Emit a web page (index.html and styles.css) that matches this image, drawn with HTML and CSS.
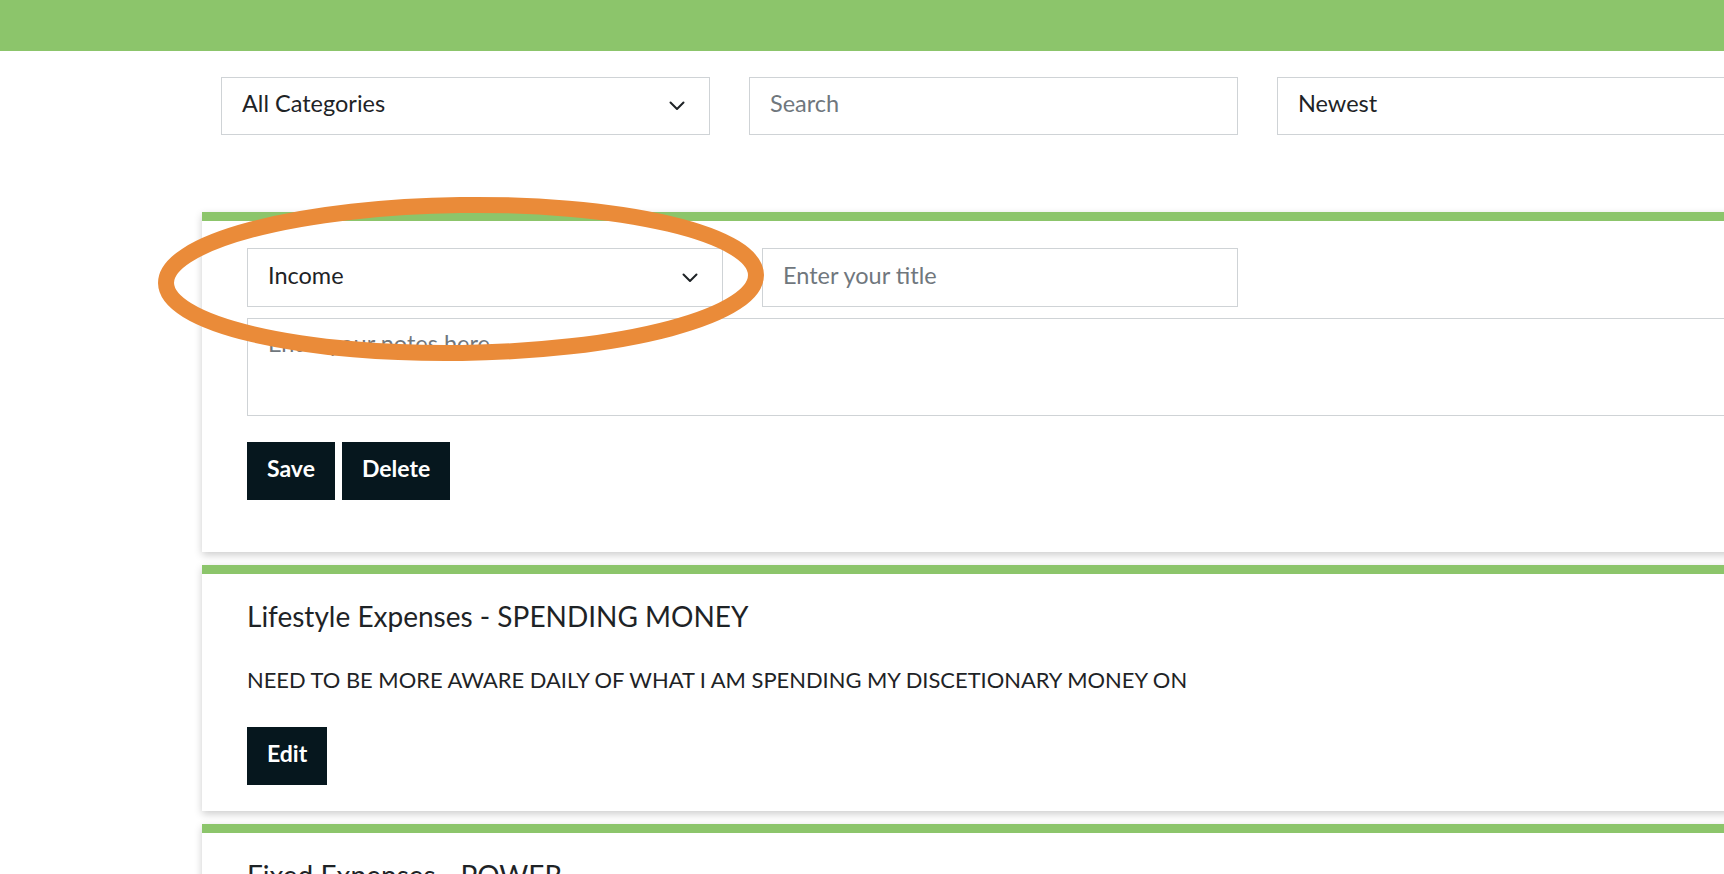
FILE: index.html
```html
<!DOCTYPE html>
<html lang="en">
<head>
<meta charset="utf-8">
<title>Notes</title>
<link rel="stylesheet" href="styles.css">
</head>
<body>
<header class="topbar"></header>
<main class="page">
  <div class="filters">
    <div class="box select"><span class="label">All Categories</span><svg class="chev" viewBox="0 0 16 10"><path d="M1.5 1.5 L8 8 L14.5 1.5"/></svg></div>
    <div class="box placeholder"><span class="label">Search</span></div>
    <div class="box select"><span class="label">Newest</span><svg class="chev" viewBox="0 0 16 10"><path d="M1.5 1.5 L8 8 L14.5 1.5"/></svg></div>
  </div>

  <section class="card card-form">
    <div class="form-row">
      <div class="box select narrow"><span class="label">Income</span><svg class="chev" viewBox="0 0 16 10"><path d="M1.5 1.5 L8 8 L14.5 1.5"/></svg></div>
      <div class="box placeholder narrow"><span class="label">Enter your title</span></div>
    </div>
    <div class="textarea placeholder">Enter your notes here</div>
    <div class="actions">
      <button class="btn">Save</button>
      <button class="btn">Delete</button>
    </div>
  </section>

  <section class="card">
    <h2 class="card-title">Lifestyle Expenses - SPENDING MONEY</h2>
    <p class="card-text">NEED TO BE MORE AWARE DAILY OF WHAT I AM SPENDING MY DISCETIONARY MONEY ON</p>
    <div class="actions"><button class="btn">Edit</button></div>
  </section>

  <section class="card">
    <h2 class="card-title">Fixed Expenses - POWER</h2>
    <p class="card-text">&nbsp;</p>
  </section>

  <svg class="annotation" viewBox="0 0 640 180" width="640" height="180">
    <ellipse cx="320" cy="90" rx="295" ry="74" transform="rotate(-0.8 320 90)"/>
  </svg>
</main>
</body>
</html>
```

FILE: styles.css
```css
* { box-sizing: border-box; }

html, body {
  margin: 0;
  padding: 0;
  background: #ffffff;
  overflow: hidden;
}

body {
  font-family: Lato, "Open Sans", "Liberation Sans", sans-serif;
  color: #212529;
  width: 1724px;
  height: 874px;
}

.topbar {
  height: 51px;
  background: #8cc56b;
}

.page {
  position: relative;
  width: 1800px;
  padding: 26px 0 0 202px;
}

.filters {
  display: flex;
  gap: 39px;
  margin-left: 19px;
}

.box {
  width: 489px;
  height: 58px;
  border: 1px solid #cfd3d6;
  background: #fff;
  display: flex;
  align-items: center;
  justify-content: space-between;
  padding: 0 24px 0 20px;
  font-size: 23.5px;
  color: #1e2326;
  flex-shrink: 0;
}

.box .label {
  margin-bottom: 6px;
}

.box.narrow {
  width: 476px;
}

.placeholder {
  color: #70777d;
}

.chev {
  width: 16px;
  height: 10px;
  fill: none;
  stroke: #1e2326;
  stroke-width: 2;
  stroke-linecap: round;
  stroke-linejoin: round;
}

.card {
  width: 1590px;
  background: #fff;
  border-top: 9px solid #8cc56b;
  box-shadow: 0 3px 8px rgba(0, 0, 0, 0.2);
  padding: 27px 45px 26px;
  margin-top: 13px;
}

.card-form {
  margin-top: 77px;
  padding-bottom: 52px;
}

.form-row {
  display: flex;
  gap: 39px;
}

.form-row .box {
  height: 59px;
}

.textarea {
  margin-top: 11px;
  height: 98px;
  border: 1px solid #cfd3d6;
  padding: 10px 20px;
  font-size: 23.5px;
}

.actions {
  display: flex;
  gap: 7px;
  margin-top: 26px;
}

.btn {
  font-family: Lato, "Open Sans", "Liberation Sans", sans-serif;
  font-weight: 700;
  font-size: 23px;
  color: #ffffff;
  background: #06171e;
  border: none;
  border-radius: 0;
  height: 58px;
  padding: 0 20px 6px;
}

.card-title {
  margin: 0;
  font-weight: 400;
  font-size: 28px;
  line-height: 31px;
  color: #1e2326;
}

.card-text {
  margin: 36px 0 0;
  font-size: 21.9px;
  line-height: 24px;
  color: #1e2326;
}

.card-text + .actions {
  margin-top: 35px;
}

.annotation {
  position: absolute;
  left: 141px;
  top: 138px;
  fill: none;
  stroke: #ea8b39;
  stroke-width: 16;
  pointer-events: none;
}
```
